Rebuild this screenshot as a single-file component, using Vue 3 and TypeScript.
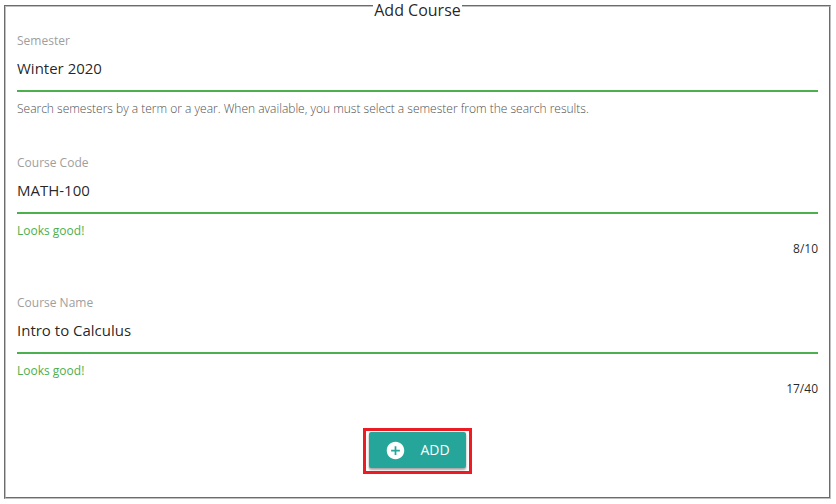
<script setup lang="ts">
import { ref } from 'vue'

interface Field {
  id: string
  label: string
  value: string
  help: string
  valid: boolean
  limit?: number
}

const fields = ref<Field[]>([
  {
    id: 'semester',
    label: 'Semester',
    value: 'Winter 2020',
    help: 'Search semesters by a term or a year. When available, you must select a semester from the search results.',
    valid: false,
  },
  { id: 'code', label: 'Course Code', value: 'MATH-100', help: 'Looks good!', valid: true, limit: 10 },
  { id: 'name', label: 'Course Name', value: 'Intro to Calculus', help: 'Looks good!', valid: true, limit: 40 },
])
</script>

<template>
  <form class="page" @submit.prevent>
    <fieldset class="panel">
      <legend class="title">Add Course</legend>
      <div class="fields">
        <div v-for="field in fields" :key="field.id" class="field">
          <label class="label" :for="field.id">{{ field.label }}</label>
          <input
            :id="field.id"
            v-model="field.value"
            class="input"
            type="text"
            autocomplete="off"
            spellcheck="false"
            :maxlength="field.limit"
            :aria-describedby="field.id + '-help'"
          />
          <span :id="field.id + '-help'" class="help" :class="{ valid: field.valid }">{{ field.help }}</span>
          <span v-if="field.limit" class="counter">{{ field.value.length }}/{{ field.limit }}</span>
        </div>
      </div>
      <div class="actions">
        <div class="highlight">
          <button class="add" type="submit">
            <svg class="icon" viewBox="0 0 24 24" aria-hidden="true">
              <path
                fill="currentColor"
                d="M12 2C6.48 2 2 6.48 2 12s4.48 10 10 10 10-4.48 10-10S17.52 2 12 2zm5 11h-4v4h-2v-4H7v-2h4V7h2v4h4v2z"
              />
            </svg>
            <span>ADD</span>
          </button>
        </div>
      </div>
    </fieldset>
  </form>
</template>

<style>
body {
  background: #fff;
}
</style>

<style scoped>
.page {
  padding: 0 5px 0 4px;
  font-family: "Segoe UI", "Open Sans", "Noto Sans", sans-serif;
  color: rgba(0, 0, 0, 0.87);
}

.panel {
  min-width: 0;
  margin: 0;
  padding: 21px 11px 23px;
  border: 2px groove #c0c0c0;
}

.title {
  height: 12px;
  margin: 0 auto;
  padding: 0 1px;
  font-size: 16px;
  line-height: 20px;
}

.fields {
  display: flex;
  flex-direction: column;
  gap: 38px;
}

.field {
  display: flex;
  flex-direction: column;
}

.label,
.help,
.counter {
  font-size: 12px;
  line-height: 16px;
}

.label {
  color: #9e9e9e;
}

.input {
  box-sizing: border-box;
  width: 100%;
  height: 43px;
  padding: 0 0 3px;
  border: 0;
  border-bottom: 2px solid #4caf50;
  border-radius: 0;
  outline: 0;
  background: transparent;
  color: rgba(0, 0, 0, 0.87);
  font-family: inherit;
  font-size: 15px;
}

.help {
  margin-top: 9px;
  color: #505050;
  font-weight: 300;
}

.help.valid {
  color: #4caf50;
  font-weight: 400;
}

.counter {
  align-self: flex-end;
  margin-top: 2px;
}

.actions {
  display: flex;
  justify-content: center;
  margin-top: 31px;
}

.highlight {
  padding: 1px 3px 3px;
  border: 3px solid #ed1c24;
}

.add {
  display: flex;
  align-items: center;
  gap: 14px;
  height: 36px;
  padding: 0 16px;
  border: 0;
  border-radius: 2px;
  background: #26a69a;
  box-shadow: 0 2px 2px rgba(0, 0, 0, 0.24), 0 1px 3px rgba(0, 0, 0, 0.2);
  color: #fff;
  font-family: inherit;
  font-size: 14px;
  line-height: 36px;
  cursor: pointer;
}

.icon {
  width: 21px;
  height: 21px;
}
</style>
